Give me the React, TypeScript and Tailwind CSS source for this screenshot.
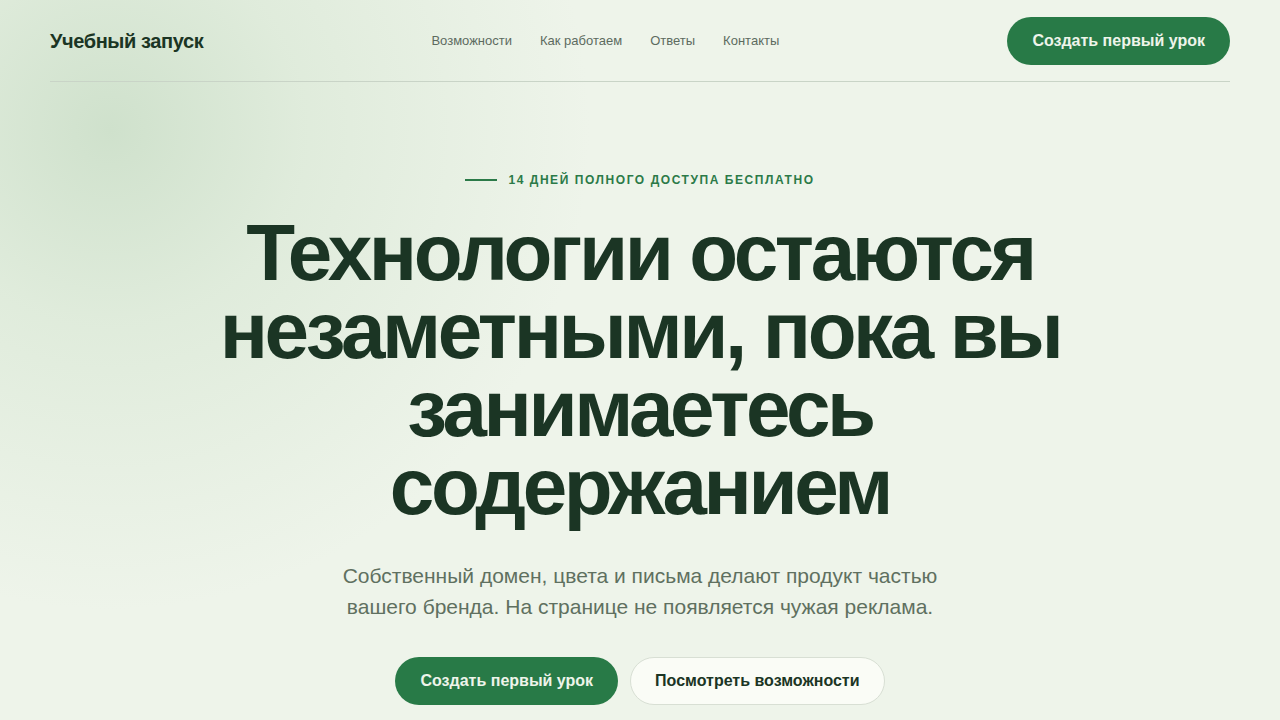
import React from "react";

export default function App() {
  return (
    <div
      className="relative min-h-[720px] w-full overflow-hidden bg-[#eef4ea] text-[#1b3524]"
      style={{ fontFamily: '"Liberation Sans", Arial, sans-serif' }}
    >
      <div className="pointer-events-none absolute inset-0 bg-[radial-gradient(ellipse_480px_480px_at_110px_130px,#cfe1cc_0%,rgba(214,230,210,0.6)_40%,rgba(238,244,234,0)_100%)]" />
      <div className="relative">
        <header className="mx-[50px] flex items-center justify-between border-b border-[#c9d4c7] pt-[17px] pb-[16px]">
          <div className="text-[20px] font-bold tracking-[-0.4px] text-[#1b3524]">Учебный запуск</div>
          <nav className="flex items-center gap-[28px] text-[13px] text-[#5d6b5f]">
            <a>Возможности</a>
            <a>Как работаем</a>
            <a>Ответы</a>
            <a>Контакты</a>
          </nav>
          <button className="h-[48px] rounded-full bg-[#287a47] px-[25px] text-[16px] font-bold text-[#eef4ea]">
            Создать первый урок
          </button>
        </header>

        <main className="flex flex-col items-center pt-[89px] text-center">
          <div className="flex items-center gap-[11px] text-[12px] font-bold tracking-[0.13em] text-[#2b7a48]">
            <span className="h-[2px] w-[32px] bg-[#2b7a48]" />
            <span>14 ДНЕЙ ПОЛНОГО ДОСТУПА БЕСПЛАТНО</span>
          </div>
          <h1 className="mt-[25px] max-w-[900px] text-[80px] font-bold leading-[78px] tracking-[-3.4px] text-[#1b3524]">
            Технологии остаются незаметными, пока вы занимаетесь содержанием
          </h1>
          <p className="mt-[34px] max-w-[620px] text-[21px] leading-[31px] text-[#5f7060]">
            Собственный домен, цвета и письма делают продукт частью вашего бренда. На странице не появляется чужая реклама.
          </p>
          <div className="mt-[35px] flex gap-[12px]">
            <button className="h-[48px] rounded-full bg-[#287a47] px-[25px] text-[16px] font-bold text-[#eef4ea]">
              Создать первый урок
            </button>
            <button className="h-[48px] rounded-full border border-[#d8dfd4] bg-[#fafcf6] px-[24px] text-[16px] font-bold text-[#1b3524]">
              Посмотреть возможности
            </button>
          </div>
        </main>
      </div>
    </div>
  );
}
